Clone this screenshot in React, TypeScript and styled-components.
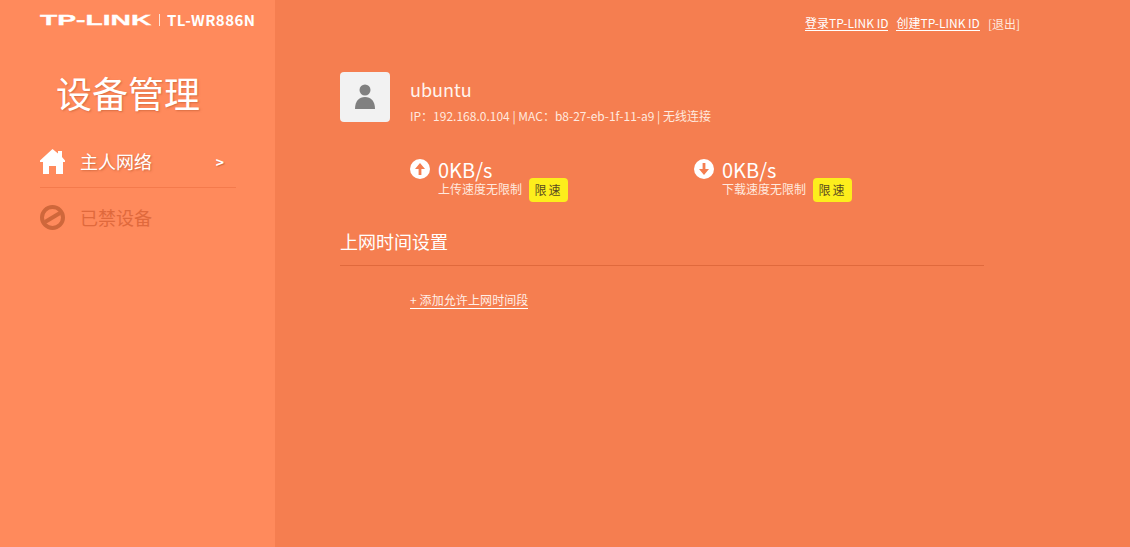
import { FC } from 'react'
import styled, { createGlobalStyle } from 'styled-components'

const GlobalStyle = createGlobalStyle`
  html, body {
    margin: 0;
    padding: 0;
    height: 100%;
  }
  body {
    font-family: "Noto Sans CJK SC", "Noto Sans", sans-serif;
    color: #fff;
    background: #f57e50;
  }
`

const Page = styled.div`
  display: flex;
  width: 1130px;
  height: 547px;
  overflow: hidden;
`

const Sidebar = styled.aside`
  width: 275px;
  flex: none;
  background: #ff8a5c;
  padding: 0 39px 0 40px;
  box-sizing: border-box;
`

const Brand = styled.div`
  display: flex;
  align-items: center;
  height: 40px;
`

const Logo = styled.div`
  width: 111px;
  flex: none;
  height: 14px;
  font: 700 15.5px/14px "Liberation Sans", sans-serif;
  white-space: nowrap;
  transform: scaleX(1.82);
  transform-origin: left center;
  -webkit-text-stroke: 0.3px #fff;
`

const ModelName = styled.div`
  flex: none;
  margin-left: 8px;
  padding-left: 7px;
  border-left: 1px solid #ffe4d8;
  font-size: 15px;
  line-height: 12px;
  font-weight: 700;
  letter-spacing: 0.45px;
  white-space: nowrap;
`

const SidebarTitle = styled.h1`
  margin: 24px 0 0 16px;
  font-size: 36px;
  line-height: 56px;
  font-weight: 400;
  text-shadow: 1px 1px 2px rgba(190, 90, 50, 0.6);
`

const NavItem = styled.div<{ $disabled?: boolean; $active?: boolean }>`
  display: flex;
  align-items: center;
  height: ${(p) => (p.$active ? '52px' : '54px')};
  color: ${(p) => (p.$disabled ? '#e0693c' : '#fff')};
  border-bottom: ${(p) => (p.$active ? '1px solid #f47a4c' : 'none')};
  margin-top: ${(p) => (p.$active ? '15px' : '2px')};
`

const NavIcon = styled.svg`
  width: 25px;
  height: 25px;
  flex: none;
  margin: 1px 15px 0 0;
`

const NavLabel = styled.span<{ $shadow?: boolean }>`
  font-size: 18px;
  flex: 1;
  text-shadow: ${(p) => (p.$shadow ? '1px 1px 2px rgba(190, 90, 50, 0.7)' : 'none')};
`

const Chevron = styled.span`
  font-size: 14px;
  font-weight: 700;
  margin: 2px 12px 0 0;
  text-shadow: 1px 1px 1px rgba(190, 90, 50, 0.7);
`

const Main = styled.main`
  flex: 1;
  padding: 0 146px 0 65px;
  display: flex;
  flex-direction: column;
`

const TopLinks = styled.div`
  display: flex;
  justify-content: flex-end;
  align-items: center;
  gap: 8px;
  height: 47px;
  font-size: 12px;
  color: #ffe9df;
  margin-right: -36px;
`

const TopLink = styled.a`
  color: #fff;
  border-bottom: 1px solid #fff;
  line-height: 14px;
`

const Host = styled.section`
  display: flex;
  margin-top: 25px;
`

const Avatar = styled.div`
  width: 50px;
  height: 50px;
  border-radius: 4px;
  background: #f2f2f2;
  display: flex;
  align-items: center;
  justify-content: center;
  flex: none;
`

const HostInfo = styled.div`
  margin-left: 20px;
`

const HostName = styled.div`
  font-size: 18px;
  line-height: 26px;
  color: #fff4ee;
  margin-top: 4px;
`

const HostMeta = styled.div`
  font-size: 12px;
  line-height: 18px;
  margin-top: 5px;
  color: #ffe9df;
`

const Speeds = styled.section`
  display: flex;
  margin: 29px 0 0 70px;
`

const Speed = styled.div`
  width: 284px;
  display: flex;
  flex: none;
`

const SpeedIcon = styled.svg`
  width: 20px;
  height: 20px;
  margin: 5px 8px 0 0;
  flex: none;
`

const SpeedValue = styled.div`
  font-size: 20px;
  line-height: 20px;
  margin-top: 6px;
`

const SpeedRow = styled.div`
  display: flex;
  align-items: center;
  margin-top: -2px;
`

const SpeedNote = styled.span`
  font-size: 12px;
  line-height: 16px;
  margin-top: -2px;
  color: #ffe9df;
`

const LimitButton = styled.button`
  width: 39px;
  height: 24px;
  margin-left: 7px;
  padding: 0;
  border: none;
  border-radius: 4px;
  background: #fdee1c;
  color: #5a4a20;
  font: 400 12px/24px "Noto Sans CJK SC", sans-serif;
  letter-spacing: 2px;
`

const SectionTitle = styled.h2`
  margin: 26px 0 0;
  height: 37px;
  font-size: 18px;
  line-height: 26px;
  font-weight: 400;
  border-bottom: 1px solid #e0693c;
`

const AddLink = styled.a`
  align-self: flex-start;
  margin: 25px 0 0 70px;
  font-size: 12px;
  line-height: 17px;
  letter-spacing: 0.1px;
  color: #ffefe8;
  border-bottom: 1px solid #fff;
`

const App: FC = () => (
  <Page>
    <GlobalStyle />
    <Sidebar>
      <Brand>
        <Logo>TP-LINK</Logo>
        <ModelName>TL-WR886N</ModelName>
      </Brand>
      <SidebarTitle>设备管理</SidebarTitle>
      <NavItem $active>
        <NavIcon viewBox="0 0 25 25">
          <path
            fill="#fff"
            d="M12.5 0 L18 4.5 V2 H22 V8 L25 11.5 V13 H23 V25 H16 V17 H9 V25 H3 V13 H0 V11.5 Z"
          />
        </NavIcon>
        <NavLabel $shadow>主人网络</NavLabel>
        <Chevron>&gt;</Chevron>
      </NavItem>
      <NavItem $disabled>
        <NavIcon viewBox="0 0 25 25">
          <circle cx="12.5" cy="12.5" r="10.5" fill="none" stroke="#cf673b" strokeWidth="4" />
          <path d="M5 17 L20 8" stroke="#cf673b" strokeWidth="4" />
        </NavIcon>
        <NavLabel>已禁设备</NavLabel>
      </NavItem>
    </Sidebar>
    <Main>
      <TopLinks>
        <TopLink>登录TP-LINK ID</TopLink>
        <TopLink>创建TP-LINK ID</TopLink>
        <span>[退出]</span>
      </TopLinks>
      <Host>
        <Avatar>
          <svg width="22" height="26" viewBox="0 0 22 26">
            <circle cx="11" cy="6" r="5.5" fill="#808080" />
            <path d="M1 25 C1 17 5 13 11 13 C17 13 21 17 21 25 Z" fill="#808080" />
          </svg>
        </Avatar>
        <HostInfo>
          <HostName>ubuntu</HostName>
          <HostMeta>IP：192.168.0.104 | MAC：b8-27-eb-1f-11-a9 | 无线连接</HostMeta>
        </HostInfo>
      </Host>
      <Speeds>
        <Speed>
          <SpeedIcon viewBox="0 0 20 20">
            <circle cx="10" cy="10" r="10" fill="#fff" />
            <path d="M10 4 L15 10 H11.4 V16 H8.6 V10 H5 Z" fill="#f57e50" />
          </SpeedIcon>
          <div>
            <SpeedValue>0KB/s</SpeedValue>
            <SpeedRow>
              <SpeedNote>上传速度无限制</SpeedNote>
              <LimitButton>限速</LimitButton>
            </SpeedRow>
          </div>
        </Speed>
        <Speed>
          <SpeedIcon viewBox="0 0 20 20">
            <circle cx="10" cy="10" r="10" fill="#fff" />
            <path d="M10 16 L15 10 H11.4 V4 H8.6 V10 H5 Z" fill="#f57e50" />
          </SpeedIcon>
          <div>
            <SpeedValue>0KB/s</SpeedValue>
            <SpeedRow>
              <SpeedNote>下载速度无限制</SpeedNote>
              <LimitButton>限速</LimitButton>
            </SpeedRow>
          </div>
        </Speed>
      </Speeds>
      <SectionTitle>上网时间设置</SectionTitle>
      <AddLink>+ 添加允许上网时间段</AddLink>
    </Main>
  </Page>
)

export default App
